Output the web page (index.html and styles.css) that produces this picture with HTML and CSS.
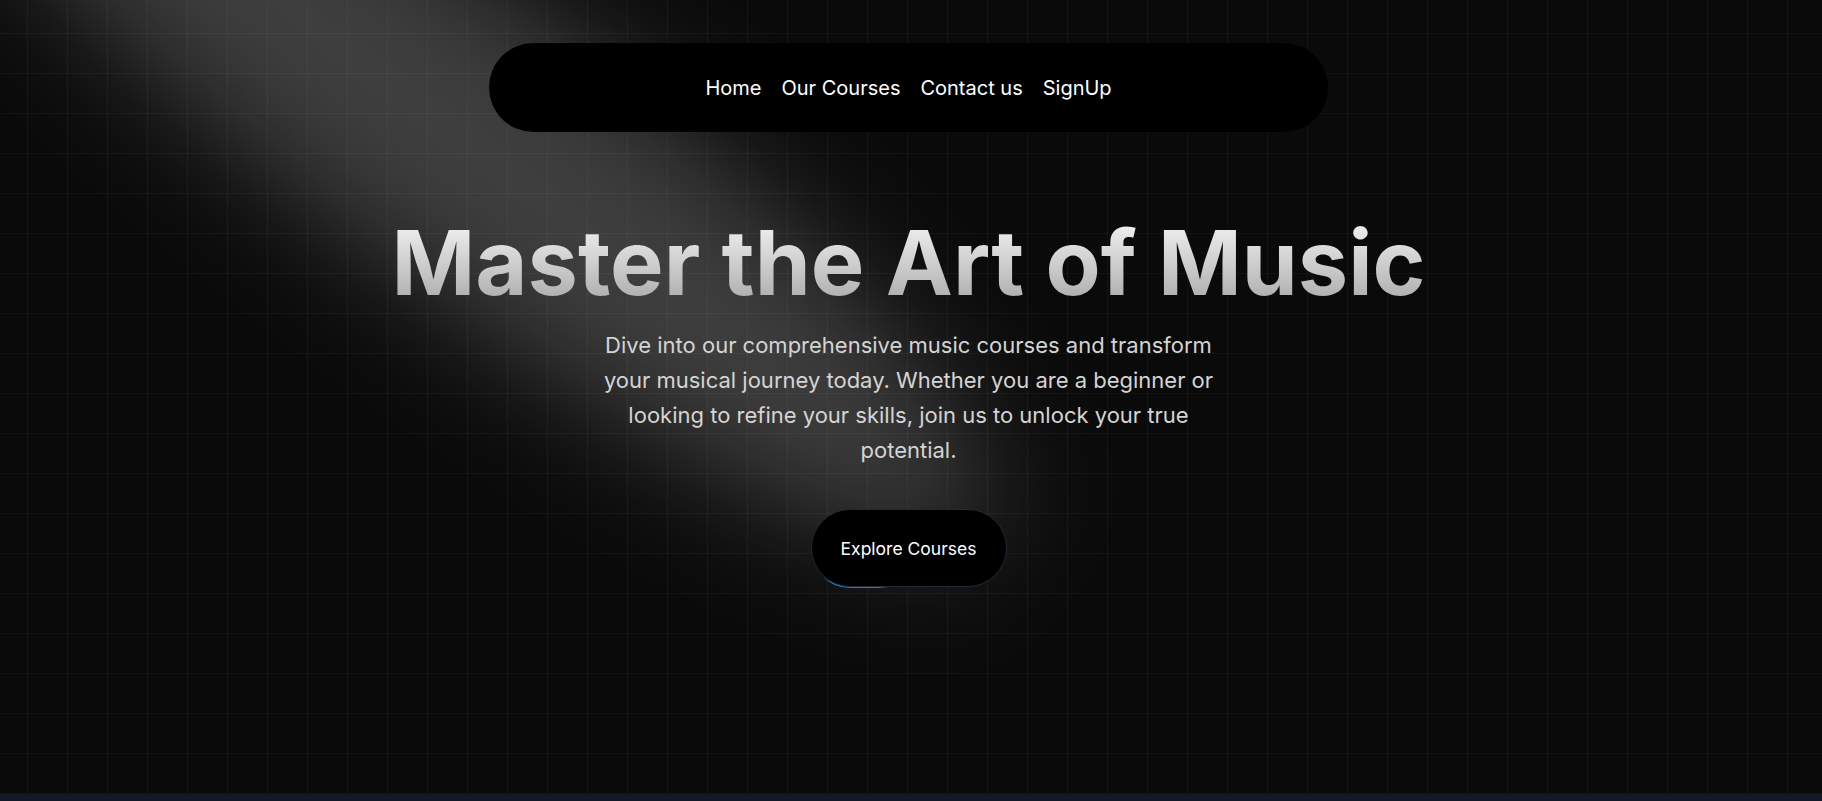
FILE: index.html
```html
<!DOCTYPE html>
<html lang="en">
<head>
<meta charset="utf-8">
<title>Master the Art of Music</title>
<link rel="stylesheet" href="styles.css">
</head>
<body>
<section class="hero">
  <div class="spotlight"></div>
  <nav class="nav">
    <a class="nav-link" href="#">Home</a>
    <a class="nav-link" href="#">Our Courses</a>
    <a class="nav-link" href="#">Contact us</a>
    <a class="nav-link" href="#">SignUp</a>
  </nav>
  <div class="content">
    <h1 class="title">Master the Art of Music</h1>
    <p class="lead">Dive into our comprehensive music courses and transform your musical journey today. Whether you are a beginner or looking to refine your skills, join us to unlock your true potential.</p>
    <a class="cta" href="#">
      <span class="cta-glow"></span>
      <span class="cta-inner">Explore Courses</span>
    </a>
  </div>
</section>
<section class="next"></section>
</body>
</html>
```
FILE: styles.css
```css
* { box-sizing: border-box; }
html, body { margin: 0; padding: 0; }
body {
  background: #111827;
  font-family: Inter, "Noto Sans", "Liberation Sans", sans-serif;
  color: #fff;
}
.hero {
  position: relative;
  height: 794px;
  overflow: hidden;
  padding-right: 5px;
  background-color: #0a0a0a;
  background-image:
    linear-gradient(to right, rgba(255,255,255,0.035) 1px, transparent 1px),
    linear-gradient(to bottom, rgba(255,255,255,0.035) 1px, transparent 1px);
  background-size: 40px 40px;
  background-position: 27px 33px;
  display: flex;
  flex-direction: column;
  align-items: center;
}
.spotlight {
  position: absolute;
  left: -235px;
  top: -20px;
  width: 1360px;
  height: 290px;
  border-radius: 50%;
  background: rgba(255,255,255,0.21);
  filter: blur(60px);
  transform: rotate(37deg);
  pointer-events: none;
  z-index: 0;
}
.nav {
  position: relative;
  z-index: 2;
  margin-top: 43px;
  width: 839px;
  height: 89px;
  background: #000;
  border-radius: 999px;
  display: flex;
  align-items: center;
  justify-content: center;
  gap: 20px;
}
.nav-link {
  color: #fff;
  text-decoration: none;
  font-size: 20px;
  line-height: 24px;
}
.content {
  position: relative;
  z-index: 1;
  display: flex;
  flex-direction: column;
  align-items: center;
  margin-top: 80px;
}
.title {
  margin: 0;
  font-size: 90px;
  line-height: 101px;
  font-weight: 700;
  background: linear-gradient(to bottom, #fafafa, #a3a3a3);
  -webkit-background-clip: text;
  background-clip: text;
  color: transparent;
  text-align: center;
}
.lead {
  margin: 15px 0 0;
  max-width: 640px;
  font-size: 22px;
  line-height: 35px;
  color: #d4d4d4;
  text-align: center;
}
.cta {
  position: relative;
  margin-top: 40px;
  width: 198px;
  height: 80px;
  padding: 1px;
  border-radius: 40px;
  overflow: hidden;
  display: block;
  text-decoration: none;
}
.cta-glow {
  position: absolute;
  left: 5px;
  top: 40px;
  width: 80px;
  height: 80px;
  background: radial-gradient(#0ea5e9 40%, transparent 60%);
  opacity: 0.8;
}
.cta-inner {
  position: relative;
  display: flex;
  align-items: center;
  justify-content: center;
  width: 100%;
  height: 100%;
  border-radius: 39px;
  border: 1px solid #1e293b;
  background: #000;
  color: #fff;
  font-size: 17.5px;
}
.next {
  height: 400px;
  background: #111827;
}
```
